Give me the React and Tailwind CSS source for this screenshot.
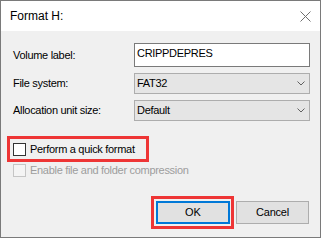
import React from 'react'

const font = { fontFamily: '"Liberation Sans", Arial, sans-serif' }

function Chevron() {
  return (
    <svg width="8" height="5" viewBox="0 0 8 5" className="shrink-0">
      <polyline points="0.5,0.5 4,4 7.5,0.5" fill="none" stroke="#606060" strokeWidth="1" />
    </svg>
  )
}

function Combo({ value }) {
  return (
    <div className="h-[21px] w-[176px] flex items-center justify-between border border-[#adadad] bg-[#e5e5e5] pl-[2px] pr-[4px]">
      <span className="text-[11px] tracking-[-0.3px] text-black">{value}</span>
      <Chevron />
    </div>
  )
}

export default function App() {
  return (
    <div className="w-[323px] h-[240px] bg-white" style={font}>
      <div className="relative w-[321px] h-[238px] border border-[#7a7a7a] flex flex-col">
        {/* Title bar */}
        <div className="h-[30px] bg-white flex items-center justify-between pl-[9px] pr-[9px]">
          <span className="text-[12px] text-black">Format H:</span>
          <svg width="11" height="11" viewBox="0 0 11 11">
            <path d="M0.5 0.5 L10.5 10.5 M10.5 0.5 L0.5 10.5" stroke="#707070" strokeWidth="1" fill="none" />
          </svg>
        </div>

        {/* Body */}
        <div className="flex-1 bg-[#f0f0f0] flex flex-col">
          <div className="mt-[12px] ml-[12px] grid grid-cols-[121px_176px] gap-y-[6px] items-center">
            <span className="text-[11px] tracking-[-0.3px] text-black">Volume label:</span>
            <div className="h-[24px] w-[176px] border border-[#7a7a7a] bg-white pl-[2px] flex items-center pb-[3px]">
              <span className="text-[11px] tracking-[-0.3px] text-black">CRIPPDEPRES</span>
            </div>
            <span className="text-[11px] tracking-[-0.3px] text-black">File system:</span>
            <Combo value="FAT32" />
            <span className="text-[11px] tracking-[-0.3px] text-black">Allocation unit size:</span>
            <Combo value="Default" />
          </div>

          <div className="mt-[22px] ml-[12px] flex flex-col gap-[8px]">
            <div className="h-[13px] flex items-center gap-[4px] leading-[13px]">
              <div className="w-[13px] h-[13px] border border-[#333333] bg-white" />
              <span className="text-[11px] tracking-[-0.3px] text-black">Perform a quick format</span>
            </div>
            <div className="h-[13px] flex items-center gap-[4px] leading-[13px]">
              <div className="w-[13px] h-[13px] border border-[#c5c5c5] bg-[#f4f4f4]" />
              <span className="text-[11px] tracking-[-0.3px] text-[#9d9d9d]">Enable file and folder compression</span>
            </div>
          </div>

          <div className="mt-auto mb-[13px] flex justify-end gap-[6px] pr-[11px]">
            <div className="w-[74px] h-[23px] border-2 border-[#0078d7] bg-[#e1e1e1] flex items-center justify-center">
              <span className="text-[11px] text-black">OK</span>
            </div>
            <div className="w-[73px] h-[23px] border border-[#adadad] bg-[#e1e1e1] flex items-center justify-center">
              <span className="text-[11px] tracking-[-0.2px] text-black">Cancel</span>
            </div>
          </div>
        </div>

        {/* Red annotation boxes */}
        <div className="absolute left-[6px] top-[135px] w-[142px] h-[26px] border-[3px] border-[#ee3535] pointer-events-none" />
        <div className="absolute left-[150px] top-[195px] w-[83px] h-[33px] border-[3px] border-[#ee3535] pointer-events-none" />
      </div>
    </div>
  )
}
